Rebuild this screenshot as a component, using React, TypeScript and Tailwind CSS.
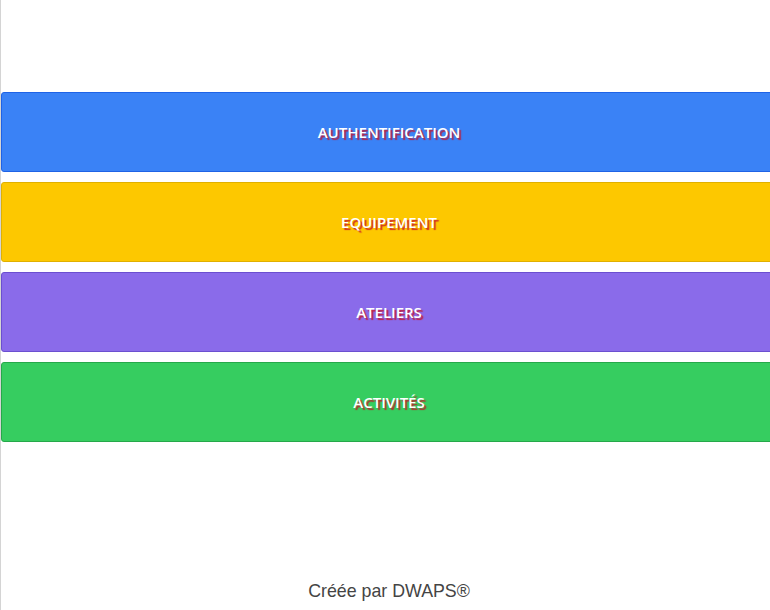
const SECTIONS = [
  { label: "AUTHENTIFICATION", cls: "bg-[#3a82f6] border-[#1f63e6]" },
  { label: "EQUIPEMENT", cls: "bg-[#fdc800] border-[#e0b000]" },
  { label: "ATELIERS", cls: "bg-[#8a6bea] border-[#6b4fd0]" },
  { label: "ACTIVITÉS", cls: "bg-[#36cd60] border-[#26a84a]" },
];

export default function App() {
  return (
    <div className="h-[610px] w-[770px] overflow-hidden bg-white">
      <div className="flex h-full w-[777px] flex-col border-l border-[#d4d4d4]">
        <div className="flex flex-col gap-[10px] pt-[92px]">
          {SECTIONS.map((s) => (
            <button
              key={s.label}
              className={`flex h-[80px] w-full items-center justify-center rounded-[3px] border font-['Open_Sans',sans-serif] text-[15px] font-semibold text-white [text-shadow:2px_2px_1px_rgba(200,20,40,0.85)] ${s.cls}`}
            >
              {s.label}
            </button>
          ))}
        </div>
        <p className="mt-auto pb-[7px] text-center font-['Liberation_Sans',sans-serif] text-[17.8px] leading-[24px] text-[#444]">
          Créée par DWAPS®
        </p>
      </div>
    </div>
  );
}
